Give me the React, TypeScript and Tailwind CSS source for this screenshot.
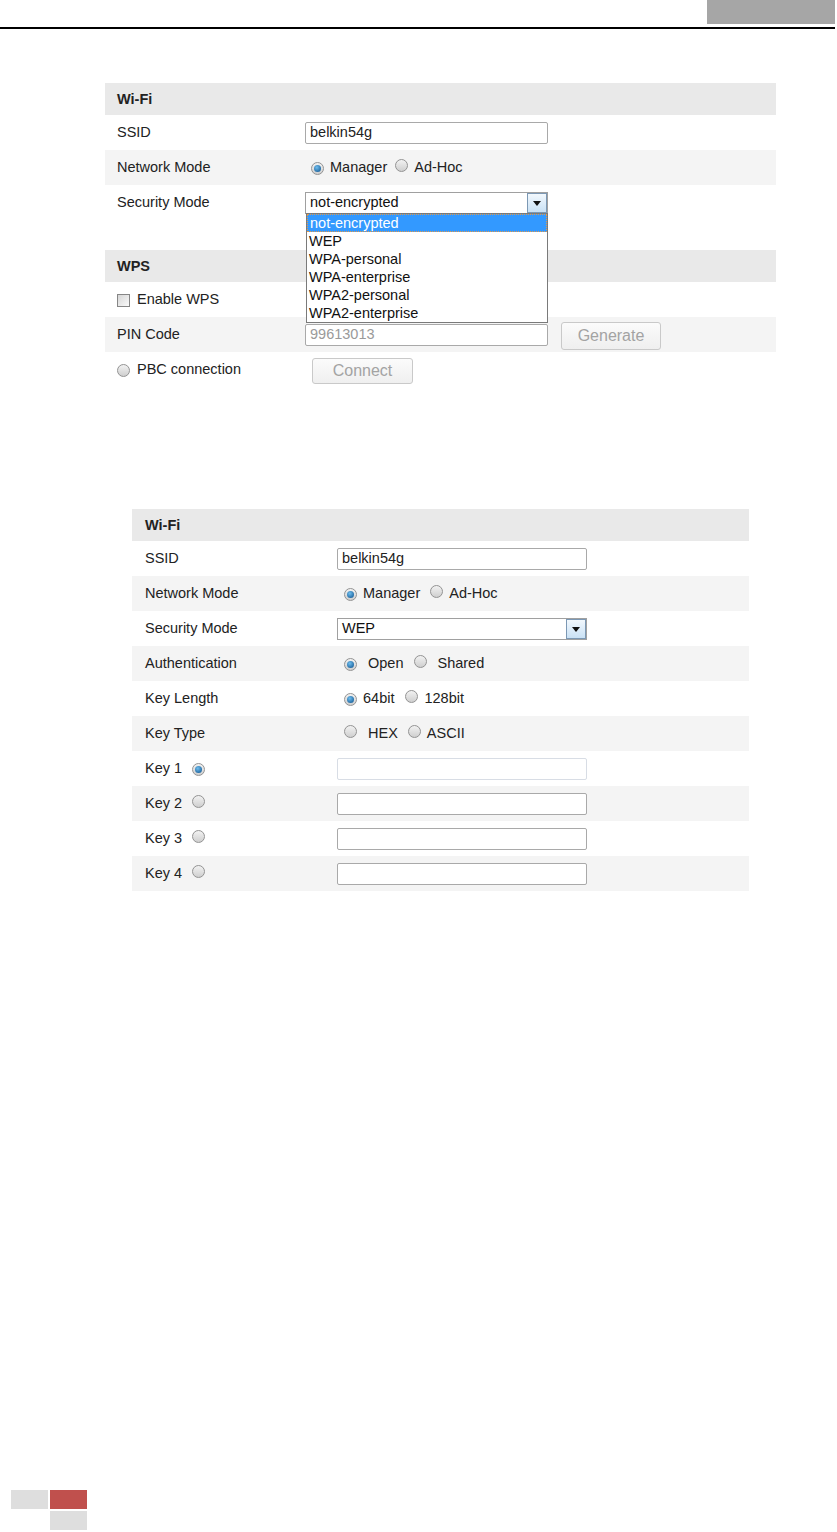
import React from 'react';

const font = "font-['Liberation_Sans',Arial,Helvetica,sans-serif]";

function Radio({ checked = false }: { checked?: boolean }) {
  return (
    <span className="inline-flex h-[13px] w-[13px] shrink-0 items-center justify-center rounded-full border border-[#939393] bg-gradient-to-b from-[#f2f2f2] to-[#cfcfcf]">
      {checked && (
        <span className="h-[7px] w-[7px] rounded-full bg-[radial-gradient(circle_at_40%_35%,#6fbdee,#0a4f8a)]" />
      )}
    </span>
  );
}

function Checkbox() {
  return <span className="inline-block h-[13px] w-[13px] shrink-0 border border-[#868686] bg-gradient-to-br from-[#d6d6d6] to-[#fafafa]" />;
}

function TextInput({ value = '', placeholder = '', light = false, width = 'w-[243px]' }: { value?: string; placeholder?: string; light?: boolean; width?: string }) {
  return (
    <div
      className={`flex h-[22px] ${width} items-center rounded-[2px] border bg-white px-[4px] ${
        light ? 'border-[#d8dde5]' : 'border-[#a9a9a9]'
      }`}
    >
      {value ? <span className="text-[#222]">{value}</span> : <span className="text-[#9a9a9a]">{placeholder}</span>}
    </div>
  );
}

function Arrow() {
  return (
    <span className="flex h-[20px] w-[20px] items-center justify-center border border-[#7c98b4] bg-gradient-to-b from-[#f2f8fd] to-[#c9e1f5]">
      <svg width="8" height="5" viewBox="0 0 8 5">
        <path d="M0 0h8L4 5z" fill="#111" />
      </svg>
    </span>
  );
}

function Select({ value, width = 'w-[243px]', children }: { value: string; width?: string; children?: React.ReactNode }) {
  return (
    <div className={`relative ${width}`}>
      <div className="flex h-[22px] items-center justify-between border border-[#a0a0a0] bg-white pl-[4px] pr-0">
        <span className="text-[#111]">{value}</span>
        <Arrow />
      </div>
      {children}
    </div>
  );
}

function Button({ label, className }: { label: string; className: string }) {
  return (
    <div
      className={`flex items-center justify-center rounded-[3px] border border-[#c9c9c9] bg-gradient-to-b from-[#fbfbfb] to-[#efefef] text-[16px] text-[#a3a3a3] ${className}`}
    >
      {label}
    </div>
  );
}

function Row({ gray = false, label, labelWidth, pad, children }: { gray?: boolean; label: React.ReactNode; labelWidth: string; pad: string; children?: React.ReactNode }) {
  return (
    <div className={`flex h-[35px] items-center pt-[1px] ${gray ? 'bg-[#f4f4f4]' : 'bg-white'}`}>
      <div className={`flex ${labelWidth} ${pad} shrink-0 items-center`}>{label}</div>
      <div className="flex items-center">{children}</div>
    </div>
  );
}

function Header({ title, pad }: { title: string; pad: string }) {
  return (
    <div className={`flex h-[32px] items-center bg-[#e9e9e9] pt-[1px] ${pad} font-bold text-[#222]`}>{title}</div>
  );
}

const options = ['not-encrypted', 'WEP', 'WPA-personal', 'WPA-enterprise', 'WPA2-personal', 'WPA2-enterprise'];

function FirstPanel() {
  const lw = 'w-[200px]';
  const pad = 'pl-[12px]';
  return (
    <div className="ml-[105px] mt-[54px] w-[671px]">
      <Header title="Wi-Fi" pad={pad} />
      <Row label="SSID" labelWidth={lw} pad={pad}>
        <TextInput value="belkin54g" />
      </Row>
      <Row gray label="Network Mode" labelWidth={lw} pad={pad}>
        <span className="ml-[6px]"><Radio checked /></span>
        <span className="ml-[6px]">Manager</span>
        <span className="ml-[8px]"><Radio /></span>
        <span className="ml-[6px]">Ad-Hoc</span>
      </Row>
      <div className="relative z-10">
        <Row label="Security Mode" labelWidth={lw} pad={pad}>
          <Select value="not-encrypted">
            <div className="absolute left-[1px] top-[21px] w-[242px] border border-[#7a7a7a] bg-white leading-[18px]">
              {options.map((o, i) => (
                <div
                  key={o}
                  className={`h-[18px] px-[2px] ${
                    i === 0 ? 'border border-dotted border-[#e39a4a] bg-[#3399ff] leading-[16px] text-white' : 'text-[#111]'
                  }`}
                >
                  {o}
                </div>
              ))}
            </div>
          </Select>
        </Row>
      </div>
      <div className="h-[30px]" />
      <Header title="WPS" pad={pad} />
      <Row
        label={
          <>
            <Checkbox />
            <span className="ml-[7px]">Enable WPS</span>
          </>
        }
        labelWidth={lw}
        pad={pad}
      />
      <Row gray label="PIN Code" labelWidth={lw} pad={pad}>
        <TextInput placeholder="99613013" />
        <Button label="Generate" className="ml-[13px] mt-[2px] h-[28px] w-[100px]" />
      </Row>
      <Row
        label={
          <>
            <Radio />
            <span className="ml-[7px]">PBC connection</span>
          </>
        }
        labelWidth={lw}
        pad={pad}
      >
        <Button label="Connect" className="ml-[7px] mt-[2px] h-[26px] w-[101px]" />
      </Row>
    </div>
  );
}

function SecondPanel() {
  const lw = 'w-[205px]';
  const pad = 'pl-[13px]';
  const tw = 'w-[250px]';
  return (
    <div className="ml-[132px] mt-[122px] w-[617px]">
      <Header title="Wi-Fi" pad={pad} />
      <Row label="SSID" labelWidth={lw} pad={pad}>
        <TextInput value="belkin54g" width={tw} />
      </Row>
      <Row gray label="Network Mode" labelWidth={lw} pad={pad}>
        <span className="ml-[7px]"><Radio checked /></span>
        <span className="ml-[6px]">Manager</span>
        <span className="ml-[10px]"><Radio /></span>
        <span className="ml-[6px]">Ad-Hoc</span>
      </Row>
      <Row label="Security Mode" labelWidth={lw} pad={pad}>
        <Select value="WEP" width={tw} />
      </Row>
      <Row gray label="Authentication" labelWidth={lw} pad={pad}>
        <span className="ml-[7px]"><Radio checked /></span>
        <span className="ml-[11px]">Open</span>
        <span className="ml-[11px]"><Radio /></span>
        <span className="ml-[10px]">Shared</span>
      </Row>
      <Row label="Key Length" labelWidth={lw} pad={pad}>
        <span className="ml-[7px]"><Radio checked /></span>
        <span className="ml-[6px]">64bit</span>
        <span className="ml-[11px]"><Radio /></span>
        <span className="ml-[6px]">128bit</span>
      </Row>
      <Row gray label="Key Type" labelWidth={lw} pad={pad}>
        <span className="ml-[7px]"><Radio /></span>
        <span className="ml-[11px]">HEX</span>
        <span className="ml-[10px]"><Radio /></span>
        <span className="ml-[6px]">ASCII</span>
      </Row>
      {[1, 2, 3, 4].map((k) => (
        <Row
          key={k}
          gray={k % 2 === 0}
          label={
            <>
              <span>Key {k}</span>
              <span className="ml-[10px]"><Radio checked={k === 1} /></span>
            </>
          }
          labelWidth={lw}
          pad={pad}
        >
          <TextInput width={tw} light={k === 1} />
        </Row>
      ))}
    </div>
  );
}

export default function App() {
  return (
    <div className={`flex min-h-[1532px] w-[837px] flex-col bg-white text-[14.5px] text-[#222] ${font}`}>
      <div className="flex justify-end pr-[2px]">
        <div className="h-[24px] w-[128px] bg-[#a6a6a6]" />
      </div>
      <div className="mt-[3px] h-[2px] w-[835px] bg-black" />
      <FirstPanel />
      <SecondPanel />
      <div className="mb-[2px] ml-[11px] mt-auto grid w-[76px] grid-cols-2 gap-[2px]">
        <div className="h-[19px] bg-[#dedede]" />
        <div className="h-[19px] bg-[#c0504d]" />
        <div />
        <div className="h-[19px] bg-[#dedede]" />
      </div>
    </div>
  );
}
